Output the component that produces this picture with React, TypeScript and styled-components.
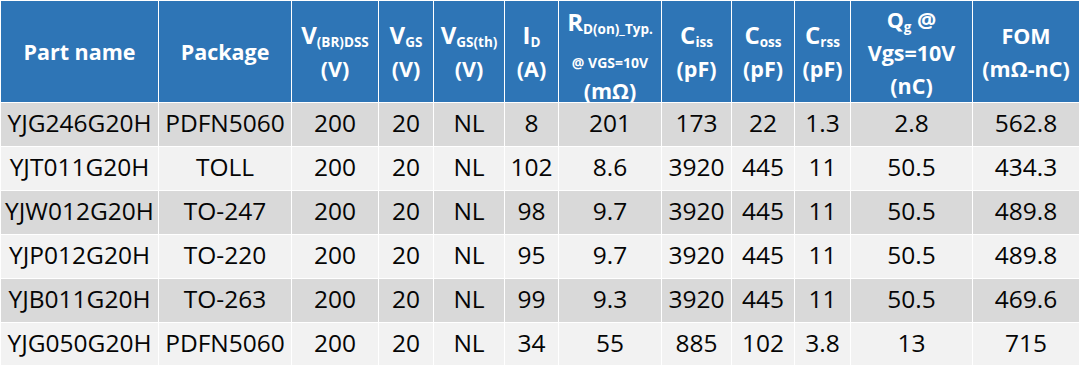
import styled, { createGlobalStyle } from "styled-components";

const GlobalStyle = createGlobalStyle`
  body {
    margin: 0;
    background: #ffffff;
    font-family: "Open Sans", "Noto Sans", sans-serif;
  }
`;

const widths = [157, 132, 86, 54, 70, 53, 102, 69, 62, 55, 121, 106];

const rows = [
  ["YJG246G20H", "PDFN5060", "200", "20", "NL", "8", "201", "173", "22", "1.3", "2.8", "562.8"],
  ["YJT011G20H", "TOLL", "200", "20", "NL", "102", "8.6", "3920", "445", "11", "50.5", "434.3"],
  ["YJW012G20H", "TO-247", "200", "20", "NL", "98", "9.7", "3920", "445", "11", "50.5", "489.8"],
  ["YJP012G20H", "TO-220", "200", "20", "NL", "95", "9.7", "3920", "445", "11", "50.5", "489.8"],
  ["YJB011G20H", "TO-263", "200", "20", "NL", "99", "9.3", "3920", "445", "11", "50.5", "469.6"],
  ["YJG050G20H", "PDFN5060", "200", "20", "NL", "34", "55", "885", "102", "3.8", "13", "715"],
];

const App = () => {
  return (
    <>
      <GlobalStyle />
      <Table>
        <colgroup>
          {widths.map((w, i) => (
            <col key={i} style={{ width: w }} />
          ))}
        </colgroup>
        <thead>
          <tr>
            <Th>Part name</Th>
            <Th>Package</Th>
            <Th>
              <Sym>V<Sub>(BR)DSS</Sub></Sym>
              <br />(V)
            </Th>
            <Th>
              <Sym>V<Sub>GS</Sub></Sym>
              <br />(V)
            </Th>
            <Th>
              <Sym>V<Sub>GS(th)</Sub></Sym>
              <br />(V)
            </Th>
            <Th>
              <Sym>I<Sub>D</Sub></Sym>
              <br />(A)
            </Th>
            <Th>
              <Stack>
                <StackTop>R<Sub>D(on)_Typ.</Sub></StackTop>
                <Small>@ VGS=10V</Small>
                <StackBottom>(mΩ)</StackBottom>
              </Stack>
            </Th>
            <Th>
              <Sym>C<Sub>iss</Sub></Sym>
              <br />(pF)
            </Th>
            <Th>
              <Sym>C<Sub>oss</Sub></Sym>
              <br />(pF)
            </Th>
            <Th>
              <Sym>C<Sub>rss</Sub></Sym>
              <br />(pF)
            </Th>
            <Th>
              <QgBlock>
                Q<Sub $g>g</Sub> @
                <br />Vgs=10V
                <br />(nC)
              </QgBlock>
            </Th>
            <Th>
              FOM
              <br />(mΩ-nC)
            </Th>
          </tr>
        </thead>
        <tbody>
          {rows.map((r, i) => (
            <Row key={i} $odd={i % 2 === 0}>
              {r.map((c, j) => (
                <Td key={j}>{c}</Td>
              ))}
            </Row>
          ))}
        </tbody>
      </Table>
    </>
  );
};

export default App;

const Table = styled.table`
  width: 1080px;
  table-layout: fixed;
  border-collapse: separate;
  border-spacing: 1px;
  background: #ffffff;
`;

const Th = styled.th`
  height: 99px;
  padding: 0;
  background: #2e75b6;
  color: #ffffff;
  font-size: 21.5px;
  font-weight: 700;
  line-height: 33px;
  text-align: center;
  vertical-align: middle;
  white-space: nowrap;
`;

const Sym = styled.span`
  font-size: 24px;
`;

const Sub = styled.sub<{ $g?: boolean }>`
  font-size: 13.5px;
  vertical-align: ${(p) => (p.$g ? "-4px" : "-3px")};
  line-height: 0;
`;

const Stack = styled.div`
  height: 99px;
  display: flex;
  flex-direction: column;
  align-items: center;
  justify-content: flex-start;
`;

const StackTop = styled.span`
  font-size: 24px;
  line-height: 30px;
  margin-top: 5px;
`;

const Small = styled.span`
  font-size: 14px;
  line-height: 16px;
  margin-top: 18px;
`;

const StackBottom = styled.span`
  line-height: 24px;
  margin-top: 8px;
`;

const QgBlock = styled.div`
  margin-top: 2px;
`;

const Row = styled.tr<{ $odd: boolean }>`
  background: ${(p) => (p.$odd ? "#d9d9d9" : "#f2f2f2")};
`;

const Td = styled.td`
  height: 43px;
  padding: 0 0 4px;
  box-sizing: border-box;
  font-size: 24.5px;
  line-height: 39px;
  color: #050505;
  text-align: center;
  vertical-align: middle;
  white-space: nowrap;
`;
